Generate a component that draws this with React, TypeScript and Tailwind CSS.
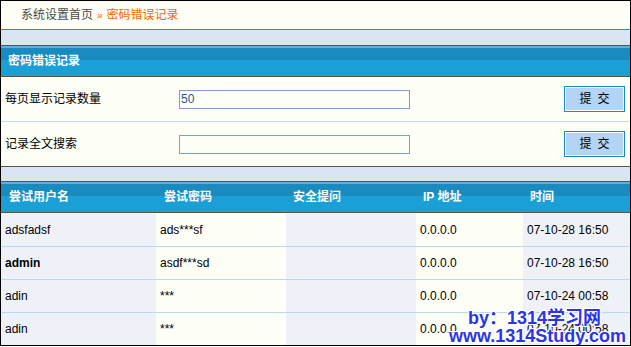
import React from 'react';

const rows = [
  { user: 'adsfadsf', pwd: 'ads***sf', q: '', ip: '0.0.0.0', time: '07-10-28 16:50', bold: false },
  { user: 'admin', pwd: 'asdf***sd', q: '', ip: '0.0.0.0', time: '07-10-28 16:50', bold: true },
  { user: 'adin', pwd: '***', q: '', ip: '0.0.0.0', time: '07-10-24 00:58', bold: false },
  { user: 'adin', pwd: '***', q: '', ip: '0.0.0.0', time: '07-10-24 00:58', bold: false },
];

const font = 'font-["Liberation_Sans","Noto_Sans_CJK_SC",sans-serif]';

function BlueBar({ children }: { children: React.ReactNode }) {
  return (
    <div className="h-[30px] border-y border-[#4b5b45] bg-[linear-gradient(#5fb1d8_0px,#5fb1d8_2px,#1a8bbf_2px,#1a8bbf_14px,#1a9fd7_14px,#1a9fd7_100%)] box-content">
      {children}
    </div>
  );
}

function SubmitButton() {
  return (
    <button className="h-[26px] w-[61px] border border-[#1a8ac0] bg-[#b3d4f5] shadow-[inset_0_0_0_1px_#ffffff] text-[12px] text-black tracking-[6px] pl-[6px]">
      提交
    </button>
  );
}

export default function App() {
  return (
    <div className={`${font} w-[631px] h-[347px] bg-white`}>
      <div className="relative w-[631px] h-[346px] border border-black bg-[#fdfef6] flex flex-col overflow-hidden">
        {/* breadcrumb */}
        <div className="h-[28px] flex items-center pl-5 text-[12px] text-[#4a4a4a]">
          系统设置首页
          <span className="mx-[4px] text-[10px] text-[#ff6600]">»</span>
          <span className="text-[#ff6600]">密码错误记录</span>
        </div>
        <div className="h-[15px] border-t border-[#2b8fc4] bg-[#dae5f3] box-content" />
        <BlueBar>
          <div className="h-full flex items-center pl-[7px] text-[12px] font-bold text-white">密码错误记录</div>
        </BlueBar>

        {/* form */}
        <div className="grid grid-cols-[178px_1fr_auto] items-center h-[44px] border-b border-[#c6dbe8] box-content">
          <span className="pl-1 text-[12px] text-black">每页显示记录数量</span>
          <input
            defaultValue="50"
            className="h-[19px] w-[231px] border border-[#7c9fcc] bg-[#fdfef6] px-[1px] text-[12px] text-[#1b5b8c] outline-none"
          />
          <div className="pr-[5px]"><SubmitButton /></div>
        </div>
        <div className="grid grid-cols-[178px_1fr_auto] items-center h-[44px]">
          <span className="pl-1 text-[12px] text-black">记录全文搜索</span>
          <input className="h-[19px] w-[231px] border border-[#7c9fcc] bg-[#fdfef6] text-[12px] outline-none" />
          <div className="pr-[5px]"><SubmitButton /></div>
        </div>

        <div className="h-[14px] border-t border-[#4b5b45] bg-[#dae5f3] box-content" />
        <BlueBar>
          <div className="h-full grid grid-cols-[155px_130px_130px_107px_1fr] items-center text-[12px] font-bold text-white">
            <span className="pl-2">尝试用户名</span>
            <span className="pl-2">尝试密码</span>
            <span className="pl-[7px]">安全提问</span>
            <span className="pl-[7px]">IP 地址</span>
            <span className="pl-[7px]">时间</span>
          </div>
        </BlueBar>

        {/* rows */}
        {rows.map((r, i) => (
          <div
            key={i}
            className={`grid grid-cols-[155px_130px_130px_107px_1fr] text-[12px] text-black ${i === 0 ? 'h-[33px]' : 'h-[33px] border-t border-[#b9d9f3]'}`}
          >
            <div className={`flex items-center pl-1 bg-[#eef2f8] ${r.bold ? 'font-bold' : ''}`}>{r.user}</div>
            <div className="flex items-center pl-1 bg-[#fdfef6]">{r.pwd}</div>
            <div className="flex items-center pl-1 bg-[#eef2f8]">{r.q}</div>
            <div className="flex items-center pl-1 bg-[#fdfef6]">{r.ip}</div>
            <div className="flex items-center pl-1 bg-[#eef2f8]">{r.time}</div>
          </div>
        ))}

        {/* watermark */}
        <div className="absolute right-[4px] bottom-[0px] flex flex-col items-end text-[18px] font-bold leading-[18px] text-[#2b35e6] [text-shadow:0_0_2px_#ffffff,1px_1px_0_#ffffff,-1px_-1px_0_#ffffff,1px_-1px_0_#ffffff,-1px_1px_0_#ffffff]">
          <span className="mr-[25px]">by：1314学习网</span>
          <span>www.1314Study.com</span>
        </div>
      </div>
    </div>
  );
}
